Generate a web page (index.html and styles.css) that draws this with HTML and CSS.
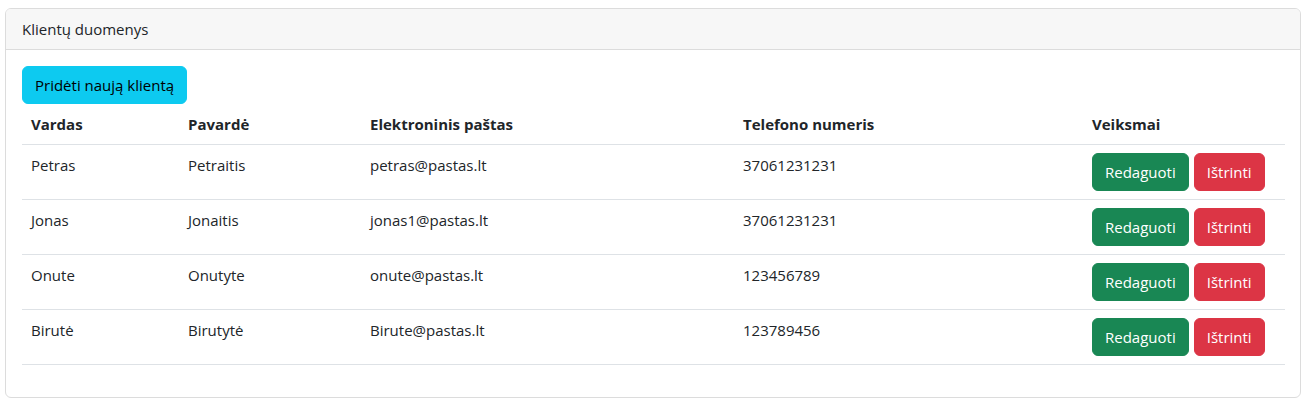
FILE: index.html
```html
<!DOCTYPE html>
<html lang="lt">
<head>
<meta charset="utf-8">
<title>Klientų duomenys</title>
<link rel="stylesheet" href="styles.css">
</head>
<body>
<div class="page">
  <div class="card">
    <div class="card-header">Klientų duomenys</div>
    <div class="card-body">
      <button class="btn btn-info">Pridėti naują klientą</button>
      <table class="table">
        <thead>
          <tr>
            <th class="c1">Vardas</th>
            <th class="c2">Pavardė</th>
            <th class="c3">Elektroninis paštas</th>
            <th class="c4">Telefono numeris</th>
            <th class="c5">Veiksmai</th>
          </tr>
        </thead>
        <tbody>
          <tr>
            <td>Petras</td><td>Petraitis</td><td>petras@pastas.lt</td><td>37061231231</td>
            <td><div class="actions"><button class="btn btn-success">Redaguoti</button><button class="btn btn-danger">Ištrinti</button></div></td>
          </tr>
          <tr>
            <td>Jonas</td><td>Jonaitis</td><td>jonas1@pastas.lt</td><td>37061231231</td>
            <td><div class="actions"><button class="btn btn-success">Redaguoti</button><button class="btn btn-danger">Ištrinti</button></div></td>
          </tr>
          <tr>
            <td>Onute</td><td>Onutyte</td><td>onute@pastas.lt</td><td>123456789</td>
            <td><div class="actions"><button class="btn btn-success">Redaguoti</button><button class="btn btn-danger">Ištrinti</button></div></td>
          </tr>
          <tr>
            <td>Birutė</td><td>Birutytė</td><td>Birute@pastas.lt</td><td>123789456</td>
            <td><div class="actions"><button class="btn btn-success">Redaguoti</button><button class="btn btn-danger">Ištrinti</button></div></td>
          </tr>
        </tbody>
      </table>
    </div>
  </div>
</div>
</body>
</html>
```
FILE: styles.css
```css
* { box-sizing: border-box; }
html, body { margin: 0; padding: 0; background: #fff; }
body {
  font-family: "Open Sans", "Noto Sans", Arial, sans-serif;
  font-size: 16px;
  line-height: 24px;
  color: #212529;
}
.page { padding: 8px 10px 5px 5px; }
.card {
  border: 1px solid #dcdcdc;
  border-radius: 6px;
  background: #fff;
  overflow: hidden;
}
.card-header {
  background: #f7f7f7;
  border-bottom: 1px solid #dcdcdc;
  padding: 8px 16px;
  font-size: 15px;
}
.card-body { padding: 16px 15px 16px 16px; }
.btn {
  display: inline-block;
  font-family: inherit;
  font-size: 15px;
  line-height: 24px;
  padding: 6px 12px;
  border: 1px solid transparent;
  border-radius: 6px;
  cursor: pointer;
}
.btn-info { background: #0dcaf0; border-color: #0dcaf0; color: #000; }
.btn-success { background: #198754; border-color: #198754; color: #fff; }
.btn-danger { background: #dc3545; border-color: #dc3545; color: #fff; }
.table {
  width: 100%;
  border-collapse: collapse;
  table-layout: fixed;
  margin-bottom: 16px;
}
.table th, .table td {
  padding: 8px 8px 8px 9px;
  text-align: left;
  vertical-align: top;
  border-bottom: 1px solid #dee2e6;
  font-size: 15px;
}
.table th { font-weight: 700; }
.c1 { width: 157px; }
.c2 { width: 182px; }
.c3 { width: 373px; }
.c4 { width: 349px; }
.actions { display: flex; gap: 5px; }
```
